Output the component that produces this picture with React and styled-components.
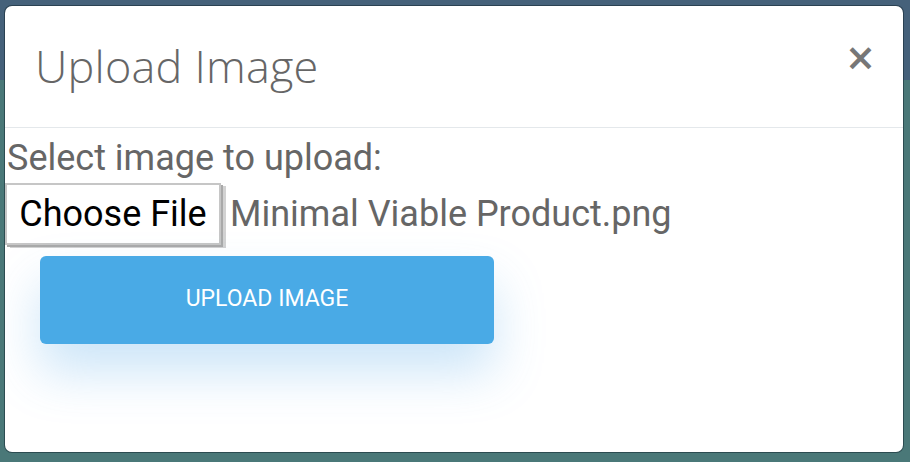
import React from 'react';
import styled, { createGlobalStyle } from 'styled-components';

const GlobalStyle = createGlobalStyle`
    html, body {
        margin: 0;
        padding: 0;
    }
    body {
        width: 910px;
        height: 462px;
        overflow: hidden;
        background: linear-gradient(to bottom, #45617a 0px, #45617a 80px, #4a7878 80px, #4a7878 100%);
        font-family: Roboto, "Liberation Sans", sans-serif;
    }
`;

const Backdrop = styled.div`
    padding: 6px 7px 10px 5px;
    height: 462px;
    box-sizing: border-box;
`;

const Modal = styled.div`
    height: 100%;
    background: #fff;
    border-radius: 7px;
    box-shadow: 0 0 0 1px rgba(20, 40, 50, 0.55);
    display: flex;
    flex-direction: column;
    overflow: hidden;
`;

const Header = styled.div`
    position: relative;
    height: 122px;
    box-sizing: border-box;
    padding: 30px 30px 0;
    border-bottom: 1px solid #e4e8eb;
`;

const Title = styled.h2`
    margin: 0;
    font-family: "Open Sans", "Liberation Sans", sans-serif;
    font-weight: 300;
    font-size: 45px;
    line-height: 60px;
    color: #666;
    letter-spacing: 0.2px;
`;

const Close = styled.button`
    position: absolute;
    top: 34px;
    right: 27px;
    border: none;
    background: none;
    padding: 0;
    font-family: "DejaVu Sans", sans-serif;
    font-size: 37px;
    font-weight: bold;
    line-height: 36px;
    color: #777;
    cursor: pointer;
`;

const Body = styled.div`
    padding: 9px 0 0;
    display: flex;
    flex-direction: column;
    align-items: flex-start;
`;

const Label = styled.div`
    font-size: 36px;
    line-height: 42px;
    color: #666;
    padding-left: 2px;
`;

const FileRow = styled.div`
    margin-top: 4px;
    display: flex;
    align-items: center;
`;

const ChooseButton = styled.button`
    height: 62px;
    width: 216px;
    box-sizing: border-box;
    padding: 0;
    font-family: Roboto, "Liberation Sans", sans-serif;
    font-size: 36px;
    color: #000;
    background: #fff;
    border: 2px solid #c6c6c6;
    box-shadow: 2px 2px 0 #a9a9a9, 5px 3px 0 #d2d2d2;
`;

const FileName = styled.span`
    margin-left: 9px;
    font-size: 36px;
    color: #666;
`;

const UploadButton = styled.button`
    margin: 11px 0 0 35px;
    width: 454px;
    height: 88px;
    border: none;
    border-radius: 6px;
    background: #49aae6;
    color: #fff;
    font-family: Roboto, "Liberation Sans", sans-serif;
    font-size: 23px;
    text-transform: uppercase;
    box-shadow: 0 28px 50px rgba(73, 160, 230, 0.28);
    padding-bottom: 4px;
`;

export default function App() {
    return (
        <>
            <GlobalStyle />
            <Backdrop>
                <Modal>
                    <Header>
                        <Title>Upload Image</Title>
                        <Close aria-label="Close">×</Close>
                    </Header>
                    <Body>
                        <Label>Select image to upload:</Label>
                        <FileRow>
                            <ChooseButton>Choose File</ChooseButton>
                            <FileName>Minimal Viable Product.png</FileName>
                        </FileRow>
                        <UploadButton>Upload Image</UploadButton>
                    </Body>
                </Modal>
            </Backdrop>
        </>
    );
}
